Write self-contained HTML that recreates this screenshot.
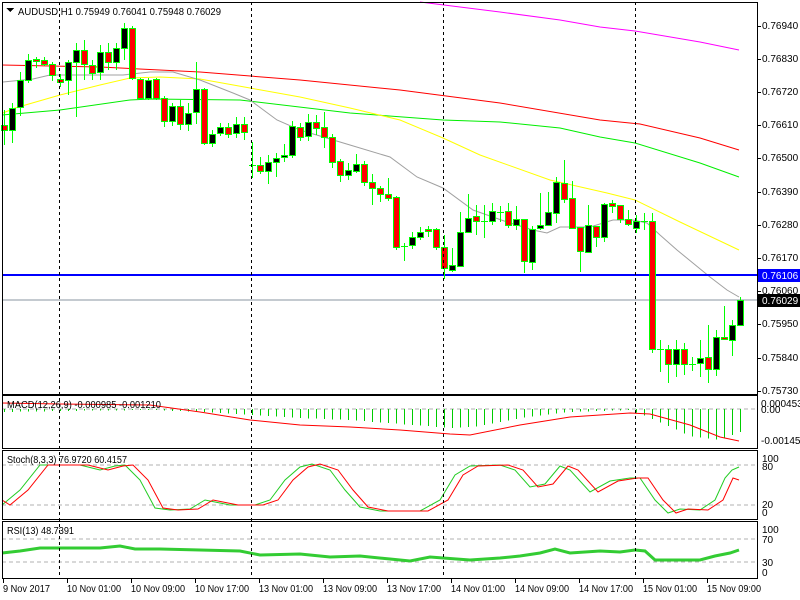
<!DOCTYPE html>
<html><head><meta charset="utf-8"><style>
html,body{margin:0;padding:0;background:#fff;width:800px;height:600px;overflow:hidden}
svg{display:block;font-family:"Liberation Sans",sans-serif;font-size:10px}
</style></head><body>
<svg id="s" width="800" height="600" xmlns="http://www.w3.org/2000/svg" shape-rendering="crispEdges">
<rect width="800" height="600" fill="#fff"/>
<g id="g"></g>
<g fill="#000">
<text x="18" y="15" textLength="203" lengthAdjust="spacingAndGlyphs">AUDUSD,H1  0.75949 0.76041 0.75948 0.76029</text>
<text x="7" y="408" textLength="154" lengthAdjust="spacingAndGlyphs">MACD(12,26,9) -0.000985 -0.001210</text>
<text x="7" y="463" textLength="120" lengthAdjust="spacingAndGlyphs">Stoch(8,3,3) 76.9720 60.4157</text>
<text x="7" y="534" textLength="67" lengthAdjust="spacingAndGlyphs">RSI(13) 48.7391</text>
<g>
<text x="762" y="29">0.76940</text><text x="762" y="62">0.76830</text><text x="762" y="95">0.76720</text>
<text x="762" y="128">0.76610</text><text x="762" y="161">0.76500</text><text x="762" y="195">0.76390</text>
<text x="762" y="228">0.76280</text><text x="762" y="261">0.76170</text><text x="762" y="294">0.76060</text>
<text x="762" y="327">0.75950</text><text x="762" y="361">0.75840</text><text x="762" y="394">0.75730</text>
<text x="761" y="407">0.000453</text><text x="761" y="413">0.00</text><text x="761" y="444">-0.001451</text>
<text x="762" y="462">100</text><text x="762" y="470">80</text><text x="762" y="508">20</text><text x="762" y="516">0</text>
<text x="762" y="533">100</text><text x="762" y="543">70</text><text x="762" y="566">30</text><text x="762" y="576">0</text>
<text x="3" y="592" textLength="47" lengthAdjust="spacingAndGlyphs">9 Nov 2017</text>
<text x="67" y="592" textLength="54" lengthAdjust="spacingAndGlyphs">10 Nov 01:00</text>
<text x="131" y="592" textLength="54" lengthAdjust="spacingAndGlyphs">10 Nov 09:00</text>
<text x="195" y="592" textLength="54" lengthAdjust="spacingAndGlyphs">10 Nov 17:00</text>
<text x="259" y="592" textLength="54" lengthAdjust="spacingAndGlyphs">13 Nov 01:00</text>
<text x="323" y="592" textLength="54" lengthAdjust="spacingAndGlyphs">13 Nov 09:00</text>
<text x="387" y="592" textLength="54" lengthAdjust="spacingAndGlyphs">13 Nov 17:00</text>
<text x="451" y="592" textLength="54" lengthAdjust="spacingAndGlyphs">14 Nov 01:00</text>
<text x="515" y="592" textLength="54" lengthAdjust="spacingAndGlyphs">14 Nov 09:00</text>
<text x="579" y="592" textLength="54" lengthAdjust="spacingAndGlyphs">14 Nov 17:00</text>
<text x="643" y="592" textLength="54" lengthAdjust="spacingAndGlyphs">15 Nov 01:00</text>
<text x="707" y="592" textLength="54" lengthAdjust="spacingAndGlyphs">15 Nov 09:00</text>
</g></g>
<path d="M6 8 L14 8 L10 12 Z" fill="#000"/>
<rect x="758" y="269" width="42" height="13" fill="#0000ff"/>
<text x="762" y="279" fill="#fff">0.76106</text>
<rect x="758" y="294" width="42" height="13" fill="#000"/>
<text x="762" y="304" fill="#fff">0.76029</text>
</svg>
<script>
var g=document.getElementById('g'),h='';
function L(x1,y1,x2,y2,c,w,d){h+='<line x1="'+x1+'" y1="'+y1+'" x2="'+x2+'" y2="'+y2+'" stroke="'+c+'" stroke-width="'+(w||1)+'"'+(d?' stroke-dasharray="'+d+'"':'')+'/>';}
function P(pts,c,w){h+='<polyline fill="none" stroke="'+c+'" stroke-width="'+(w||1)+'" points="'+pts+'" shape-rendering="auto"/>';}
L(2,409,757,409,'#b0b0b0',1,'4,3');
L(2,465,757,465,'#b0b0b0',1,'4,3');L(2,505,757,505,'#b0b0b0',1,'4,3');
L(2,539,757,539,'#b0b0b0',1,'4,3');L(2,562,757,562,'#b0b0b0',1,'4,3');
P('420,2 500,12 560,20 600,27 635,31 700,42 739,50','#ff00ff');
P('2,65 100,67 200,72 300,80 400,90 500,103 600,120 640,124 700,138 739,150','#ff0000');
P('2,115 60,110 130,100 150,99 240,100 350,113 443,120 500,122 560,128 600,137 635,143 700,163 739,177','#00ee00');
P('3,113 15,108 60,95 100,85 130,78 160,77 200,79 250,88 300,97 350,108 400,120 443,138 480,155 550,180 607,193 635,200 680,222 739,250','#ffff00');
P('3,82 33,79 50,75 123,75 150,72 173,72 200,80 233,93 250,100 277,120 300,130 350,145 390,157 417,177 443,188 473,210 507,222 533,230 547,233 560,227 590,227 613,220 633,220 647,223 660,235 677,250 710,277 727,290 739,297','#a0a0a0');
L(2,275,757,275,'#0000ff',2);
L(2,300,757,300,'#8a96a0',1);
var C=[[125,130,110,145],[130,108,103,143],[107,80,72,116],[80,60,54,83],[59,61,57,68],[60,64,57,66],[64,75,62,81],[79,82,74,87],[80,62,60,95],[62,50,43,117],[50,64,40,80],[65,73,60,80],[72,52,45,80],[52,62,43,70],[62,48,43,70],[48,28,23,60],[28,78,26,80],[79,98,78,100],[98,80,78,100],[79,98,78,100],[98,121,96,127],[121,106,103,126],[106,124,100,130],[124,113,103,131],[112,89,62,124],[89,143,88,145],[143,134,130,147],[133,127,123,136],[127,134,123,138],[133,124,117,138],[124,132,117,140],
[165,165,142,178],[165,171,157,174],[171,162,155,184],[162,158,153,177],[157,155,144,162],[155,126,121,158],[127,137,123,141],[136,122,114,141],[122,128,115,135],[127,137,112,148],[137,162,134,168],[161,175,159,182],[175,170,163,180],[171,164,154,173],[164,182,161,186],[182,188,174,205],[188,194,186,202],[194,198,178,201],[197,247,196,250],[246,246,243,261],[245,237,232,249],[237,232,227,240],[229,231,226,237],[229,247,228,250],[247,268,235,279],[270,265,248,272],[266,232,212,266],[232,218,194,232],[216,221,205,235],[221,221,205,238],[221,211,203,225],[212,212,206,222],[211,225,203,228],[225,219,206,230],[219,261,219,273],[262,229,226,270],[228,225,193,230],[225,212,192,226],[213,182,177,223],[183,199,160,203],[198,228,181,229],[227,251,227,272],[252,225,205,253],[226,237,227,247],[237,204,203,242],[203,206,200,213],[205,219,205,223],[219,224,210,226],[228,221,215,233],[221,221,213,230],[221,349,213,353],[349,349,340,372],[349,364,345,383],[364,349,340,377],[349,364,343,375],[364,364,357,371],[363,358,340,377],[357,369,325,383],[369,337,330,376],[337,339,306,338],[340,325,320,356],[325,300,297,326]];
for(var i=0;i<C.length;i++){var x=4+8*i,c=C[i],o=c[0],cl=c[1],t=Math.min(o,cl),b=Math.max(o,cl);
L(x+.5,c[2],x+.5,c[3],'#00ff00');
if(b-t<1){L(x-3,t+.5,x+4,t+.5,'#00ff00',1);}
else{var f=cl>o?'#ff0000':'#000';h+='<rect x="'+(x-2.5)+'" y="'+(t+.5)+'" width="6" height="'+(b-t)+'" fill="'+f+'" stroke="#00ff00" stroke-width="1"/>';}}
var sig=[[2,403],[60,404],[150,405],[200,412],[250,420],[300,425],[350,427],[400,430],[450,434],[470,435],[520,425],[570,417],[630,413],[650,414],[690,425],[720,437],[739,441]];
function interp(a,x){for(var k=0;k<a.length-1;k++){if(x>=a[k][0]&&x<=a[k+1][0]){var t=(x-a[k][0])/(a[k+1][0]-a[k][0]);return a[k][1]+t*(a[k+1][1]-a[k][1]);}}return a[a.length-1][1];}
var hist=[[2,412],[60,411],[150,410],[200,412],[250,415],[300,418],[350,420],[400,424],[450,428],[480,426],[520,418],[570,412],[630,410],[650,418],[690,436],[720,440],[739,432]];
for(var x=4;x<=740;x+=8){var y=interp(hist,x);if(y>409.5)L(x+.5,409,x+.5,y,'#00cc00');}
P(sig.map(function(p){return p.join(',')}).join(' '),'#ff0000');
var sm=[[2,505],[20,490],[40,465],[80,465],[100,470],[115,466],[125,465],[140,480],[155,508],[170,510],[190,509],[205,500],[215,502],[230,505],[255,505],[270,500],[285,480],[300,467],[312,464],[330,470],[345,490],[360,507],[380,511],[420,511],[440,500],[455,475],[470,466],[500,465],[515,470],[530,487],[545,484],[560,466],[570,470],[590,492],[610,481],[630,478],[640,478],[655,500],[668,513],[680,509],[700,510],[715,500],[725,478],[732,470],[739,467]];
var sr=sm.map(function(p){return [p[0]+8,p[1]]});sr[sr.length-1]=[739,480];sr.unshift([2,500]);
P(sm.map(function(p){return p.join(',')}).join(' '),'#22cc22');
P(sr.filter(function(p){return p[0]<=739}).map(function(p){return p.join(',')}).join(' '),'#ff0000');
P('2,553 20,551 40,548 60,548 100,548 120,546 135,549 160,549 200,550 240,551 260,555 300,554 330,557 360,556 390,559 410,561 430,557 470,560 500,558 520,556 540,553 555,549 570,553 600,551 620,552 635,550 645,551 655,560 700,560 715,556 730,553 739,550','#33cc33',3);
[59,251,443,635].forEach(function(x){L(x+.5,2,x+.5,579,'#000',1,'3,3');});
h+='<rect x="2.5" y="2.5" width="755" height="392" fill="none" stroke="#000"/>';
h+='<rect x="2.5" y="395.5" width="755" height="53" fill="none" stroke="#000"/>';
h+='<rect x="2.5" y="450.5" width="755" height="69" fill="none" stroke="#000"/>';
h+='<rect x="2.5" y="521.5" width="755" height="57" fill="none" stroke="#000"/>';
[26,59,92,125,158,192,225,258,291,324,358,391].forEach(function(y){L(757,y+.5,761,y+.5,'#000');});
[3,67,131,195,259,323,387,451,515,579,643,707].forEach(function(x){L(x+.5,579,x+.5,583,'#000');});
g.innerHTML=h;
</script>
</body></html>
